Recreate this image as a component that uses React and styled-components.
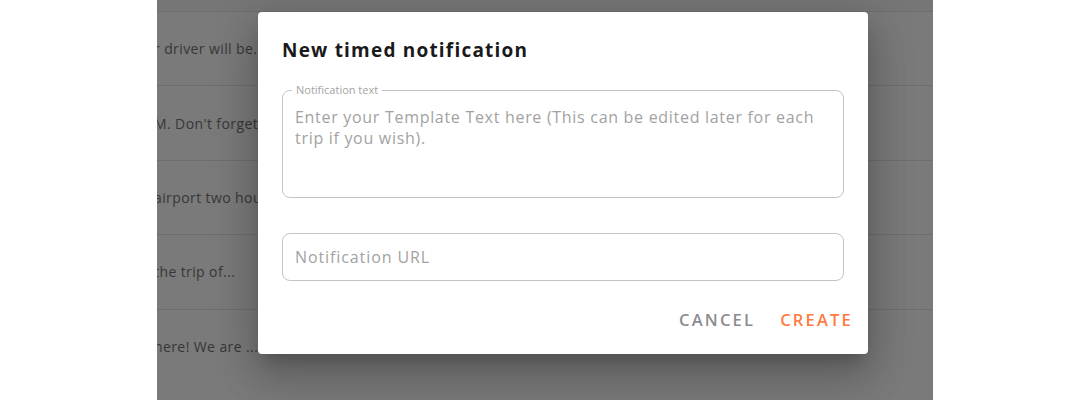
import styled, { createGlobalStyle } from "styled-components";

const GlobalStyle = createGlobalStyle`
  body {
    margin: 0;
    background: #ffffff;
    font-family: "Open Sans", "Liberation Sans", sans-serif;
  }
`;

const rows = [
  "r driver will be...",
  "M. Don't forget to bring",
  "airport two hours before",
  "the trip of...",
  "here! We are ...",
];

export default function App() {
  return (
    <>
      <GlobalStyle />
      <Page>
        <Backdrop>
          <TopStrip />
          {rows.map((text) => (
            <Row key={text}>
              <RowText>{text}</RowText>
            </Row>
          ))}
        </Backdrop>
        <Dialog>
          <Title>New timed notification</Title>
          <Form>
            <Outlined>
              <FloatLabel>Notification text</FloatLabel>
              <TextArea
                rows={3}
                placeholder="Enter your Template Text here (This can be edited later for each trip if you wish)."
              />
            </Outlined>
            <Outlined>
              <Input placeholder="Notification URL" />
            </Outlined>
          </Form>
          <Actions>
            <ActionButton>Cancel</ActionButton>
            <ActionButton primary>Create</ActionButton>
          </Actions>
        </Dialog>
      </Page>
    </>
  );
}

const Page = styled.div`
  position: relative;
  width: 1090px;
  height: 400px;
  display: flex;
  justify-content: center;
  overflow: hidden;
`;

const Backdrop = styled.div`
  width: 776px;
  height: 400px;
  background: #7a7a7a;
  display: flex;
  flex-direction: column;
  overflow: hidden;
`;

const TopStrip = styled.div`
  height: 11px;
  flex-shrink: 0;
  background: #767676;
`;

const Row = styled.div`
  height: 73.4px;
  flex-shrink: 0;
  border-top: 1px solid #6e6e6e;
  display: flex;
  align-items: center;
`;

const RowText = styled.span`
  margin-left: -3px;
  font-family: "Open Sans", sans-serif;
  font-size: 14px;
  letter-spacing: 0.4px;
  color: #373737;
  white-space: nowrap;
`;

const Dialog = styled.div`
  position: absolute;
  left: 258px;
  top: 12px;
  width: 610px;
  height: 342px;
  box-sizing: border-box;
  background: #ffffff;
  border-radius: 4px;
  padding: 24px 24px 0;
  display: flex;
  flex-direction: column;
  box-shadow: 0 11px 15px -7px rgba(0, 0, 0, 0.2),
    0 24px 38px 3px rgba(0, 0, 0, 0.14), 0 9px 46px 8px rgba(0, 0, 0, 0.12);
`;

const Title = styled.h2`
  margin: 0;
  font-family: "Open Sans", sans-serif;
  font-size: 19px;
  font-weight: 700;
  line-height: 29px;
  letter-spacing: 1.2px;
  color: #1a1a1a;
`;

const Form = styled.div`
  margin-top: 25px;
  display: flex;
  flex-direction: column;
  gap: 35px;
`;

const Outlined = styled.div`
  position: relative;
  border: 1px solid #c4c4c4;
  border-radius: 8px;
  display: flex;
`;

const FloatLabel = styled.span`
  position: absolute;
  left: 9px;
  top: -8px;
  padding: 0 4px;
  background: #ffffff;
  font-size: 11px;
  line-height: 14px;
  color: #a3a3a3;
`;

const fieldText = `
  flex: 1;
  border: none;
  outline: none;
  background: transparent;
  font-family: "Open Sans", sans-serif;
  font-size: 16px;
  color: #333;
  padding: 0 12px;
  &::placeholder {
    color: #a2a2a2;
    opacity: 1;
  }
`;

const TextArea = styled.textarea`
  ${fieldText}
  height: 106px;
  box-sizing: border-box;
  padding-top: 16px;
  line-height: 21px;
  letter-spacing: 0.7px;
  resize: none;
`;

const Input = styled.input`
  ${fieldText}
  height: 46px;
  box-sizing: border-box;
  letter-spacing: 0.9px;
`;

const Actions = styled.div`
  margin-top: 23px;
  margin-right: -17px;
  display: flex;
  justify-content: flex-end;
  gap: 9px;
`;

const ActionButton = styled.button`
  border: none;
  background: transparent;
  padding: 6px 8px;
  font-family: "Open Sans", sans-serif;
  font-size: 16.5px;
  line-height: 20px;
  font-weight: 600;
  letter-spacing: 2.2px;
  text-transform: uppercase;
  color: ${(p) => (p.primary ? "#ff7a42" : "#8b8c90")};
  cursor: pointer;
`;
